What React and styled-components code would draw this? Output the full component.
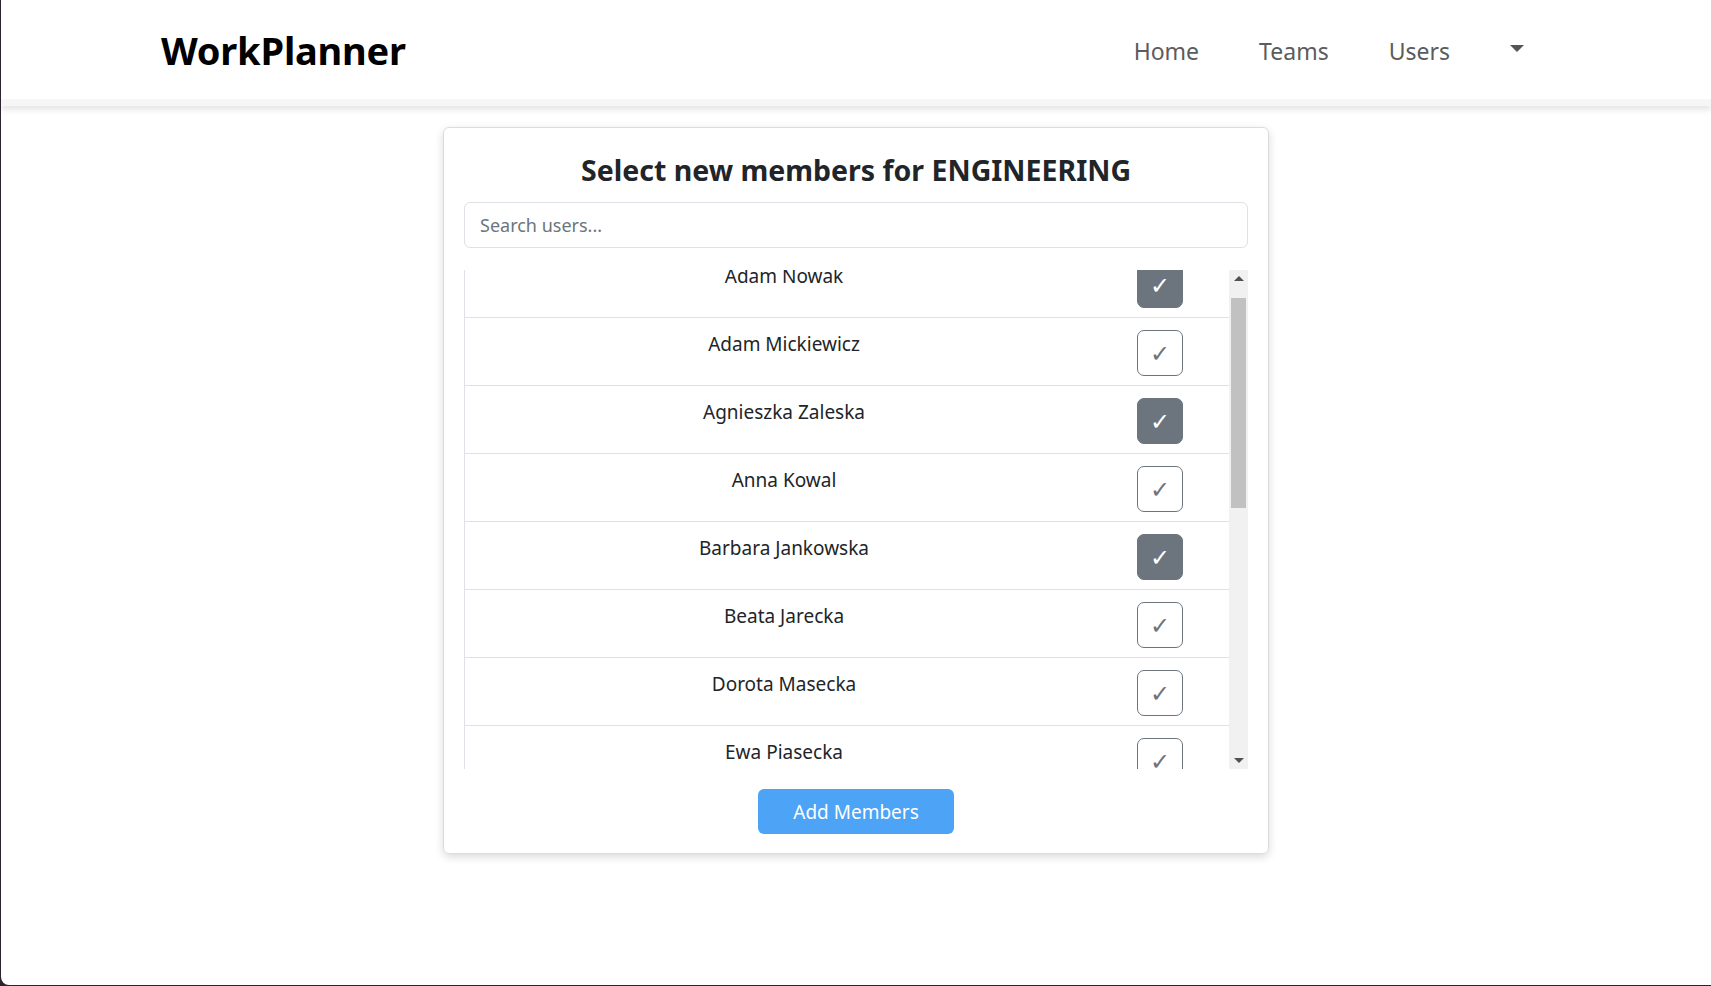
import React, { useLayoutEffect, useRef, useState } from "react";
import styled, { createGlobalStyle } from "styled-components";

const GlobalStyle = createGlobalStyle`
  html, body {
    margin: 0;
    padding: 0;
    background: #2b2430;
  }
  * {
    box-sizing: border-box;
  }
`;

const Page = styled.div`
  margin-left: 1px;
  height: 985px;
  background: #ffffff;
  border-bottom-left-radius: 8px;
  font-family: "Noto Sans", "Open Sans", sans-serif;
  color: #212529;
  overflow: hidden;
`;

const Navbar = styled.nav`
  height: 106px;
  padding: 1px 187px 0 160px;
  display: flex;
  align-items: center;
  justify-content: space-between;
  background: #ffffff;
  border-bottom: 7px solid #f6f6f7;
  box-shadow: 0 4px 6px rgba(0, 0, 0, 0.1);
`;

const Brand = styled.a`
  font-size: 38px;
  font-weight: 700;
  color: #000000;
  text-decoration: none;
  letter-spacing: -0.2px;
`;

const NavLinks = styled.div`
  display: flex;
  align-items: center;
  gap: 60px;
  padding-top: 2px;
`;

const NavLink = styled.a`
  font-size: 23px;
  color: #5c5c5c;
  text-decoration: none;
`;

const Caret = styled.span`
  width: 0;
  height: 0;
  border-left: 7px solid transparent;
  border-right: 7px solid transparent;
  border-top: 7px solid #555555;
  margin-bottom: 6px;
`;

const Main = styled.main`
  display: flex;
  justify-content: center;
  padding-top: 21px;
`;

const Card = styled.section`
  width: 826px;
  padding: 23px 20px 19px;
  border: 1px solid #dcdcdc;
  border-radius: 6px;
  box-shadow: 0 3px 8px rgba(0, 0, 0, 0.15);
  display: flex;
  flex-direction: column;
  align-items: stretch;
`;

const Title = styled.h2`
  margin: 0 0 13px;
  font-size: 28.5px;
  line-height: 38px;
  font-weight: 700;
  text-align: center;
  color: #212529;
`;

const Search = styled.input`
  height: 46px;
  padding: 0 15px;
  border: 1px solid #dee2e6;
  border-radius: 6px;
  font-family: inherit;
  font-size: 18px;
  color: #212529;
  outline: none;
  &::placeholder {
    color: #6c757d;
  }
`;

const ListBox = styled.div`
  margin-top: 22px;
  height: 499px;
  display: flex;
`;

const List = styled.div`
  flex: 1;
  overflow: hidden;
`;

const Row = styled.div`
  display: grid;
  grid-template-columns: 1fr 46px;
  column-gap: 34px;
  padding: 12px 46px 9px 0;
  border-left: 1px solid #dee2e6;
  border-bottom: 1px solid #dee2e6;
`;

const Name = styled.span`
  margin-top: 1px;
  font-size: 19px;
  line-height: 27px;
  text-align: center;
  color: #212529;
`;

const Check = styled.button`
  width: 46px;
  height: 46px;
  padding: 2px 0 0;
  border: 1px solid #6c757d;
  border-radius: 7px;
  background: ${(p) => (p.$checked ? "#6c757d" : "#ffffff")};
  color: ${(p) => (p.$checked ? "#ffffff" : "#6c757d")};
  font-family: "DejaVu Sans", sans-serif;
  font-size: 24px;
  font-weight: 300;
  line-height: 1;
  cursor: pointer;
`;

const Scrollbar = styled.div`
  width: 19px;
  background: #f1f1f1;
  display: flex;
  flex-direction: column;
  align-items: center;
`;

const Arrow = styled.span`
  height: 17px;
  display: flex;
  align-items: center;
  justify-content: center;
  &::after {
    content: "";
    border-left: 5px solid transparent;
    border-right: 5px solid transparent;
    ${(p) =>
      p.$down
        ? "border-top: 5px solid #505050;"
        : "border-bottom: 5px solid #505050;"}
  }
`;

const Thumb = styled.div`
  width: 15px;
  height: 210px;
  margin-top: 11px;
  background: #c1c1c1;
`;

const Spacer = styled.div`
  flex: 1;
`;

const AddButton = styled.button`
  align-self: center;
  margin-top: 20px;
  width: 196px;
  height: 45px;
  border: none;
  border-radius: 6px;
  background: #4da3f5;
  color: #ffffff;
  font-family: inherit;
  font-size: 19px;
  cursor: pointer;
`;

const users = [
  { name: "Adam Nowak", checked: true },
  { name: "Adam Mickiewicz", checked: false },
  { name: "Agnieszka Zaleska", checked: true },
  { name: "Anna Kowal", checked: false },
  { name: "Barbara Jankowska", checked: true },
  { name: "Beata Jarecka", checked: false },
  { name: "Dorota Masecka", checked: false },
  { name: "Ewa Piasecka", checked: false },
  { name: "Jan Kowalski", checked: false },
  { name: "Katarzyna Nowicka", checked: false },
  { name: "Krzysztof Kamiński", checked: false },
  { name: "Magdalena Dąbrowska", checked: false },
  { name: "Marek Wiśniewski", checked: false },
  { name: "Piotr Zieliński", checked: false },
  { name: "Tomasz Lewandowski", checked: false },
  { name: "Zofia Wójcik", checked: false },
];

function UserList() {
  const listRef = useRef(null);
  const [selected, setSelected] = useState(users.map((u) => u.checked));

  // lista jest lekko przewinięta, jak na zrzucie
  useLayoutEffect(() => {
    if (listRef.current) listRef.current.scrollTop = 20;
  }, []);

  const toggle = (i) => {
    setSelected(selected.map((v, j) => (j === i ? !v : v)));
  };

  return (
    <ListBox>
      <List ref={listRef}>
        {users.map((u, i) => (
          <Row key={u.name}>
            <Name>{u.name}</Name>
            <Check $checked={selected[i]} onClick={() => toggle(i)}>
              ✓
            </Check>
          </Row>
        ))}
      </List>
      <Scrollbar>
        <Arrow />
        <Thumb />
        <Spacer />
        <Arrow $down />
      </Scrollbar>
    </ListBox>
  );
}

export default function App() {
  return (
    <>
      <GlobalStyle />
      <Page>
        <Navbar>
          <Brand href="#">WorkPlanner</Brand>
          <NavLinks>
            <NavLink href="#">Home</NavLink>
            <NavLink href="#">Teams</NavLink>
            <NavLink href="#">Users</NavLink>
            <Caret />
          </NavLinks>
        </Navbar>
        <Main>
          <Card>
            <Title>Select new members for ENGINEERING</Title>
            <Search placeholder="Search users..." />
            <UserList />
            <AddButton>Add Members</AddButton>
          </Card>
        </Main>
      </Page>
    </>
  );
}
